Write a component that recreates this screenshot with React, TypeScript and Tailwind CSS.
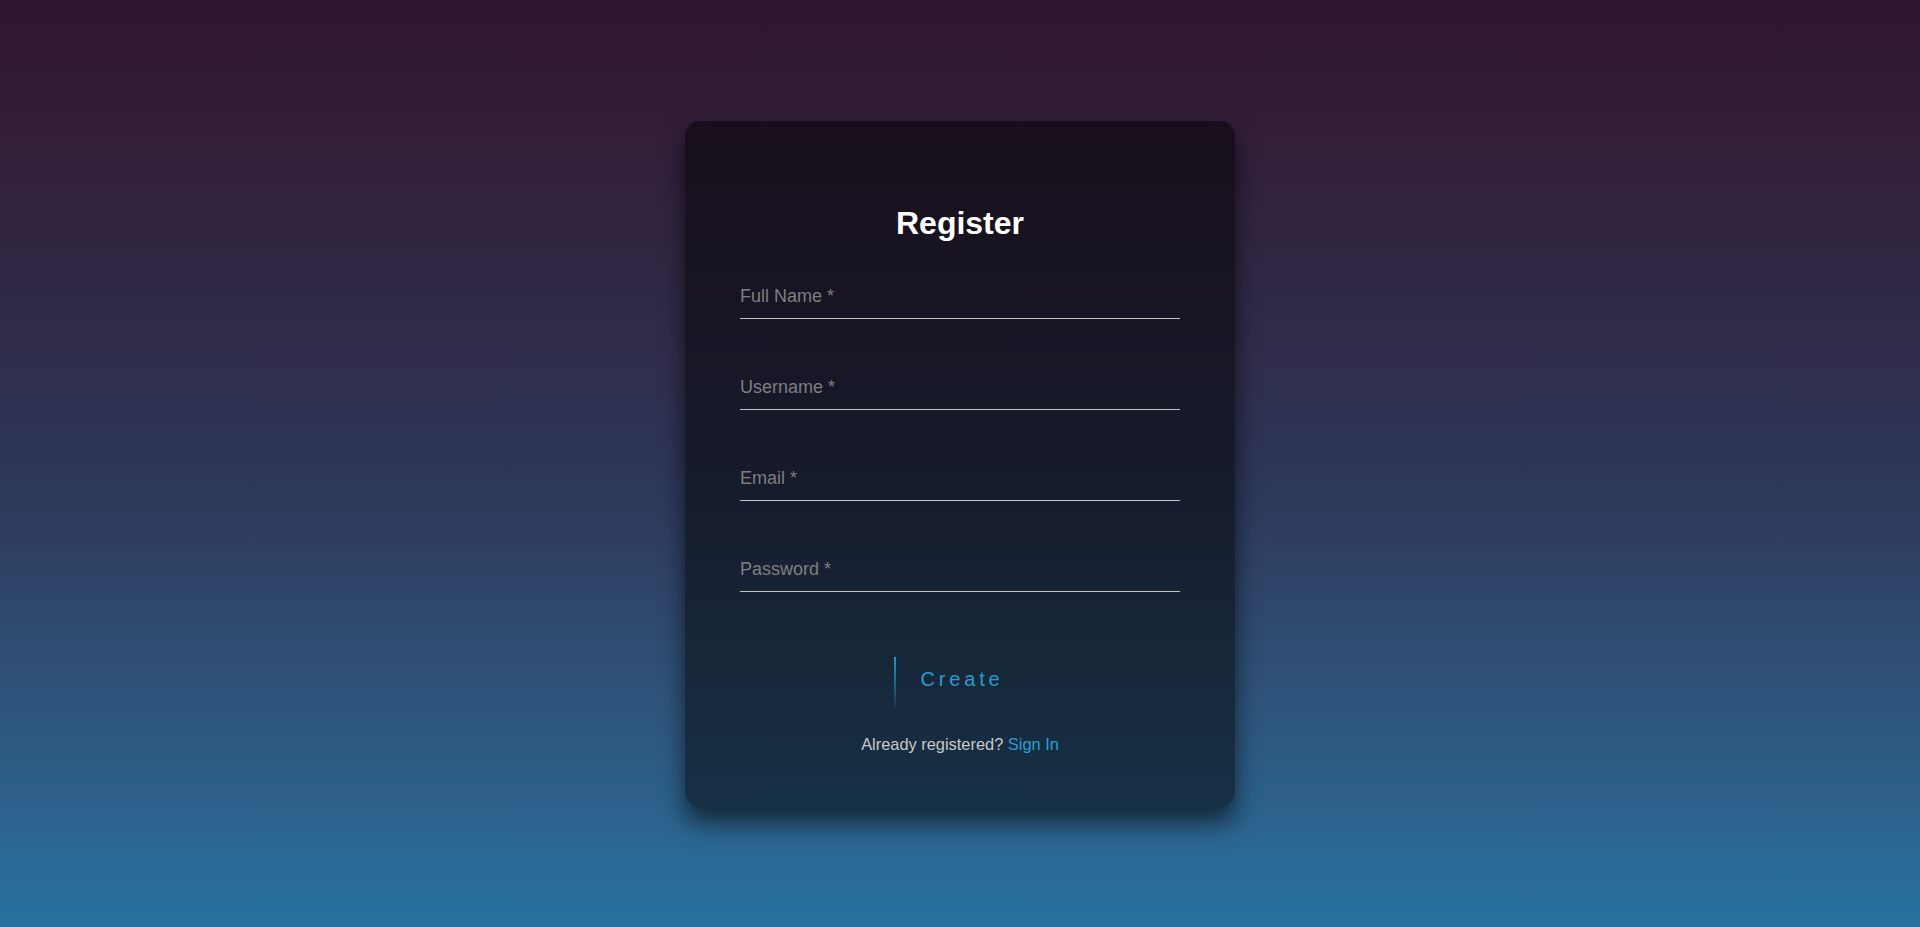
import React, { useState } from "react";

const fields = [
  { name: "fullName", label: "Full Name *", type: "text" },
  { name: "username", label: "Username *", type: "text" },
  { name: "email", label: "Email *", type: "email" },
  { name: "password", label: "Password *", type: "password" },
];

const App: React.FC = () => {
  const [values, setValues] = useState<Record<string, string>>({});

  return (
    <div
      className="min-h-[927px] w-full flex items-center justify-center bg-gradient-to-b from-[#31142d] via-[#2d3556] to-[#2672a0]"
      style={{ fontFamily: '"Liberation Sans", Arial, sans-serif' }}
    >
      <div className="w-[550px] h-[686px] rounded-[15px] bg-black/50 shadow-[0_15px_25px_rgba(0,0,0,0.6)] px-[55px] pt-[84px] flex flex-col">
        <h2 className="text-center text-white font-bold text-[32px] leading-[37px]">Register</h2>

        {/* inputs use placeholder as the label */}
        <form className="mt-[33px] flex flex-col gap-[47px]" onSubmit={e => e.preventDefault()}>
          {fields.map(f => (
            <input
              key={f.name}
              type={f.type}
              placeholder={f.label}
              value={values[f.name] ?? ""}
              onChange={e => setValues(prev => ({ ...prev, [f.name]: e.target.value }))}
              className="w-full h-[44px] bg-transparent border-b border-[#c4c4c4] text-white text-[18px] outline-none placeholder:text-[#7f7f7f]"
            />
          ))}
        </form>

        <div className="mt-[65px] flex justify-center">
          <button className="relative h-[51px] pl-[27px] pr-[23px] pb-[6px] text-[20px] tracking-[3.8px] text-[#2b9dcb]">
            <span className="absolute left-0 top-0 h-full w-[2px] bg-gradient-to-b from-[#1f9cc6] to-[#1f9cc6]/10" />
            Create
          </button>
        </div>

        <p className="mt-[24px] text-center text-[16.4px] text-[#c9c9c9]">
          Already registered?{" "}
          <a href="#" className="text-[#2a9fd0]">
            Sign In
          </a>
        </p>
      </div>
    </div>
  );
};

export default App;
